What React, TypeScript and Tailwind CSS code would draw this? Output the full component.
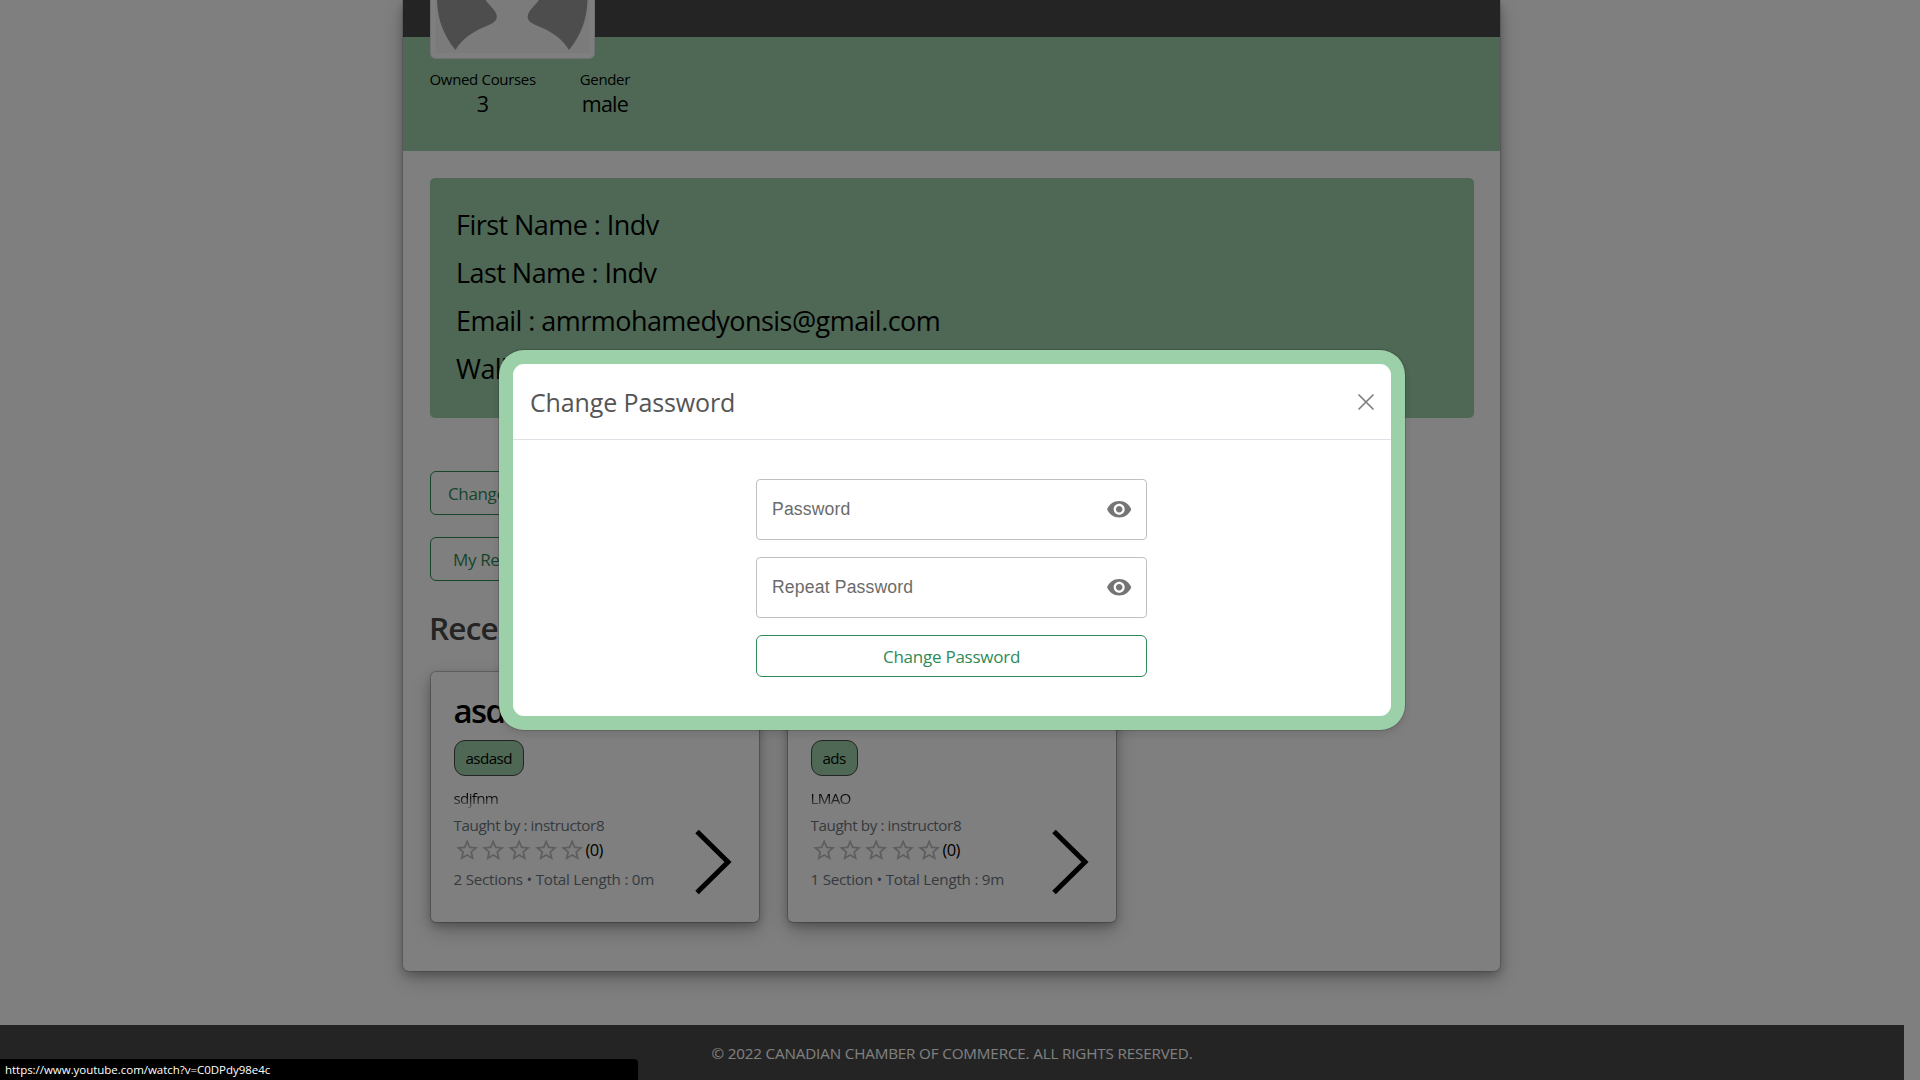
import React from "react";

type Course = {
  title: string;
  tag: string;
  description: string;
  instructor: string;
  details: string;
};

const courses: Course[] = [
  { title: "asdasd", tag: "asdasd", description: "sdjfnm", instructor: "instructor8", details: "2 Sections • Total Length : 0m" },
  { title: "asd", tag: "ads", description: "LMAO", instructor: "instructor8", details: "1 Section • Total Length : 9m" },
];

function Star() {
  return (
    <svg viewBox="0 0 24 24" className="h-[26.4px] w-[26.4px] shrink-0 fill-[#bdbdbd]">
      <path d="M22 9.24l-7.19-.62L12 2 9.19 8.63 2 9.24l5.46 4.73L5.82 21 12 17.27 18.18 21l-1.63-7.03L22 9.24zM12 15.4l-3.76 2.27 1-4.28-3.32-2.88 4.38-.38L12 6.1l1.71 4.04 4.38.38-3.32 2.88 1 4.28L12 15.4z" />
    </svg>
  );
}

function CourseCard({ course }: { course: Course }) {
  return (
    <article className="flex h-[250px] w-[328px] justify-between rounded-[5px] bg-white pl-[22.5px] pr-[27px] pt-[19px] shadow-[0_0_0_1px_rgba(0,0,0,0.2),0_4px_10px_0_rgba(0,0,0,0.22),0_8px_22px_0_rgba(0,0,0,0.24)]">
      <div className="flex flex-col items-start">
        <h3 className="h-10 text-[33px] font-semibold leading-10 tracking-[-1.6px] text-black">{course.title}</h3>
        <span className="mt-[9px] flex h-9 items-center rounded-[11px] border border-[#484848] bg-[#9dd0aa] pl-[11px] pr-[11.5px] text-[15.2px] tracking-[-0.6px] text-black">
          {course.tag}
        </span>
        <p className="mt-[10px] h-[23px] bg-gradient-to-b from-black from-30% to-white to-110% bg-clip-text text-[15.2px] leading-6 tracking-[-0.7px] text-transparent">
          {course.description}
        </p>
        <p className="mt-1 h-6 whitespace-nowrap text-[15.2px] leading-6 tracking-[-0.4px] text-[#6c757d]">
          Taught by : {course.instructor}
        </p>
        <div className="flex h-[26px] items-center">
          {[1, 2, 3, 4, 5].map((n) => (
            <Star key={n} />
          ))}
          <span className="text-[16.5px] leading-6 tracking-[-0.6px] text-black">(0)</span>
        </div>
        <p className="mt-1 h-6 whitespace-nowrap text-[15.2px] leading-6 tracking-[-0.24px] text-[#6c757d]">{course.details}</p>
      </div>
      <svg viewBox="0 0 38 66" className="mt-[138px] h-[66px] w-[38px] shrink-0 fill-none stroke-black stroke-[5]">
        <path d="M3 2.5 34 33 3 63.5" />
      </svg>
    </article>
  );
}

function PasswordField({ label }: { label: string }) {
  return (
    <label className="flex h-[61px] items-center justify-between rounded-[4px] border border-[#c0c0c0] pl-[15px] pr-[14px]">
      <span className="font-['Liberation_Sans',Arial,sans-serif] text-[17.6px] tracking-[0.16px] text-[#6b6b6b]">{label}</span>
      <svg viewBox="0 0 24 24" className="h-[26.4px] w-[26.4px] fill-[#757575]">
        <path d="M12 4.5C7 4.5 2.73 7.61 1 12c1.73 4.39 6 7.5 11 7.5s9.27-3.11 11-7.5c-1.73-4.39-6-7.5-11-7.5zM12 17c-2.76 0-5-2.24-5-5s2.24-5 5-5 5 2.24 5 5-2.24 5-5 5zm0-8c-1.66 0-3 1.34-3 3s1.34 3 3 3 3-1.34 3-3-1.34-3-3-3z" />
      </svg>
    </label>
  );
}

function ProfileStat({ label, value }: { label: string; value: string }) {
  return (
    <div className="text-center text-black">
      <div className="h-[25px] text-[15px] leading-6 tracking-[-0.33px]">{label}</div>
      <div className="h-6 text-[21.5px] leading-6 tracking-[-0.8px]">{value}</div>
    </div>
  );
}

function Profile() {
  return (
    <main className="ml-[403px] h-[971px] w-[1097px] rounded-b-[6px] bg-white shadow-[0_0_0_1px_rgba(0,0,0,0.12),0_4px_10px_0_rgba(0,0,0,0.22),0_8px_22px_0_rgba(0,0,0,0.24)]">
      <div className="relative h-[37px] bg-[#484848]">
        <svg viewBox="0 0 165 59" className="absolute left-[27px] top-0 h-[59px] w-[165px]">
          <path d="M.5 -8V53.500a5 5 0 0 0 5 5H159.500a5 5 0 0 0 5-5V-8z" fill="#fff" stroke="#dee2e6" />
          <path d="M5.500 0H159.500V53H5.500z" fill="#f6f6f6" />
          <path d="M7 0C7.500 20 14 36 25.500 50C32 38 46 30 60 24.500C68 21 68.500 16 64 10C60.500 5.500 57.500 3 55.500 0z" fill="#9a9a9a" />
          <path d="M157.500 0C157 20 150.500 36 139 50C132.500 38 118.500 30 104.500 24.500C96.500 21 96 16 100.500 10C104 5.500 107 3 109 0z" fill="#9a9a9a" />
        </svg>
      </div>
      <div className="flex h-[114px] items-start gap-[44px] bg-[#9dd0aa] pl-[26.5px] pt-[30px]">
        <ProfileStat label="Owned Courses" value="3" />
        <ProfileStat label="Gender" value="male" />
      </div>
      <div className="px-[27px] pt-[27px]">
        <section className="h-[240px] w-[1044px] rounded-[5px] bg-[#9dd0aa] px-[26px] pt-[23px] text-[27px] leading-[48px] tracking-[-0.55px] text-black">
          <p>First Name : Indv</p>
          <p>Last Name : Indv</p>
          <p>Email : amrmohamedyonsis@gmail.com</p>
          <p>Wallet : 0</p>
        </section>
        <div className="mt-[53px] flex flex-col items-start gap-[22px] text-[17px] tracking-[-0.35px] text-[#2e8b57]">
          <button className="h-11 w-[173px] rounded-[6px] border border-[#2e8b57] pl-[17px] pt-[2px] text-left">Change Password</button>
          <button className="h-11 w-[173px] rounded-[6px] border border-[#2e8b57] pl-[22px] pt-[2px] text-left">My Reports</button>
        </div>
        <h2 className="-ml-px mt-[27px] h-10 text-[31.5px] font-semibold leading-10 tracking-[-0.8px] text-[#484848]">Recent Courses</h2>
        <div className="ml-px mt-6 flex gap-[29px]">
          {courses.map((course) => (
            <CourseCard key={course.title} course={course} />
          ))}
        </div>
      </div>
    </main>
  );
}

function ChangePasswordDialog() {
  return (
    <div className="fixed inset-0 bg-black/50">
      <div role="dialog" className="ml-[499px] mt-[350px] h-[380px] w-[906px] rounded-[25px] bg-[#9cd0a9] p-[14px] shadow-[0_0_0_1px_rgba(0,0,0,0.15),0_4px_10px_0_rgba(0,0,0,0.12)]">
        <div className="h-[352px] rounded-[11px] bg-white">
          <header className="flex h-[76px] items-center justify-between border-b border-[#dee2e6] pl-[17px] pr-[17px]">
            <h4 className="pt-[2px] text-[25px] tracking-[-0.13px] text-[#555]">Change Password</h4>
            <svg viewBox="0 0 16 16" className="h-4 w-4 fill-none stroke-[#7f7f7f] stroke-[1.7]">
              <path d="M1 1l14 14M15 1L1 15" strokeLinecap="round" />
            </svg>
          </header>
          <form className="ml-[243px] mt-[39px] flex w-[391px] flex-col gap-[17px]">
            <PasswordField label="Password" />
            <PasswordField label="Repeat Password" />
            <button type="button" className="h-[42px] rounded-[6px] border border-[#2e8b57] pt-[2px] text-[17px] tracking-[-0.25px] text-[#2e8b57]">
              Change Password
            </button>
          </form>
        </div>
      </div>
    </div>
  );
}

export default function App() {
  return (
    <div className="h-[1080px] w-[1920px] overflow-hidden bg-white font-['Open_Sans','Noto_Sans',sans-serif] font-[370]">
      <Profile />
      <footer className="mt-[54px] flex h-[55px] w-[1904px] items-center justify-center bg-[#484848] pt-[2px] text-[15.2px] tracking-[-0.15px] text-white">
        © 2022 CANADIAN CHAMBER OF COMMERCE. ALL RIGHTS RESERVED.
      </footer>
      <ChangePasswordDialog />
      <div className="fixed bottom-0 left-0 h-[21px] w-[638px] rounded-tr-[4px] bg-black pl-[5px] text-[11.5px] leading-[21px] tracking-[-0.03px] text-white">
        https://www.youtube.com/watch?v=C0DPdy98e4c
      </div>
    </div>
  );
}
